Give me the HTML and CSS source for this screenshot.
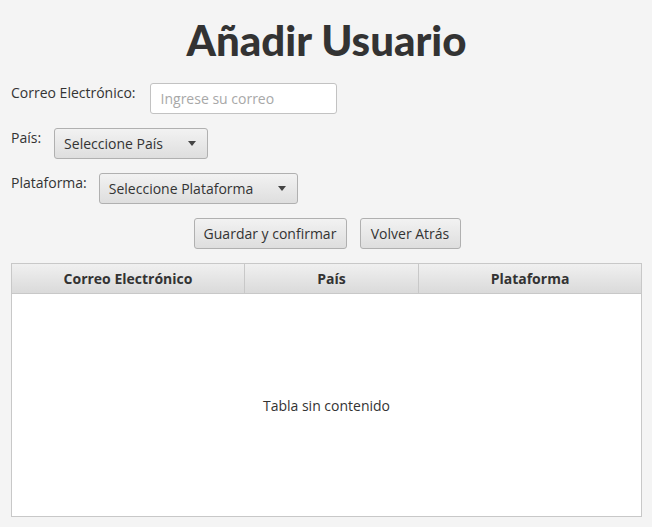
FILE: index.html
```html
<!DOCTYPE html>
<html lang="es">
<head>
<meta charset="utf-8">
<link rel="stylesheet" href="styles.css">
</head>
<body>
<div class="page">
  <h1 class="title">Añadir Usuario</h1>
  <div class="row row-email">
    <span class="label">Correo Electrónico:</span>
    <div class="field"><span class="placeholder">Ingrese su correo</span></div>
  </div>
  <div class="row row-pais">
    <span class="label">País:</span>
    <div class="combo combo-pais"><span class="combo-text">Seleccione País</span><span class="arrow"></span></div>
  </div>
  <div class="row row-plat">
    <span class="label">Plataforma:</span>
    <div class="combo combo-plat"><span class="combo-text">Seleccione Plataforma</span><span class="arrow"></span></div>
  </div>
  <div class="actions">
    <button class="btn btn-save">Guardar y confirmar</button>
    <button class="btn btn-back">Volver Atrás</button>
  </div>
  <div class="table">
    <div class="thead">
      <div class="th th-1">Correo Electrónico</div>
      <div class="th th-2">País</div>
      <div class="th th-3">Plataforma</div>
    </div>
    <div class="tbody">Tabla sin contenido</div>
  </div>
</div>
</body>
</html>
```
FILE: styles.css
```css
html, body {
  margin: 0;
  padding: 0;
  background: #f4f4f4;
}
body {
  font-family: "Open Sans", "Noto Sans", sans-serif;
  font-size: 14px;
  color: #333333;
  width: 652px;
  height: 527px;
  overflow: hidden;
}
.page {
  padding: 0 10px 0 11px;
  display: flex;
  flex-direction: column;
}
.title {
  margin: 14px 0 0 0;
  height: 52px;
  line-height: 52px;
  font-family: "Lato", "Open Sans", sans-serif;
  font-size: 42px;
  font-weight: 900;
  text-align: center;
  color: #333333;
}
.row {
  display: flex;
  align-items: flex-start;
}
.row-email { margin-top: 17px; }
.row-pais { margin-top: 14px; }
.row-plat { margin-top: 14px; }
.label {
  line-height: 18px;
  padding-top: 1px;
  white-space: nowrap;
}
.row-email .label { margin-right: 14px; }
.row-pais .label { margin-right: 13px; }
.row-plat .label { margin-right: 12px; }
.field {
  box-sizing: border-box;
  width: 187px;
  height: 31px;
  background: #ffffff;
  border: 1px solid #c2c2c2;
  border-radius: 3px;
  display: flex;
  align-items: center;
  padding-left: 10px;
}
.placeholder {
  color: #a8a8a8;
}
.combo {
  box-sizing: border-box;
  height: 31px;
  border: 1px solid #b0b0b0;
  border-radius: 3px;
  background: linear-gradient(#f2f2f2, #dedede);
  display: flex;
  align-items: center;
  padding-left: 9px;
  padding-right: 11px;
}
.combo-pais { width: 154px; }
.combo-plat { width: 199px; }
.combo-text {
  flex: 1;
  white-space: nowrap;
}
.arrow {
  width: 0;
  height: 0;
  border-left: 4px solid transparent;
  border-right: 4px solid transparent;
  border-top: 5px solid #444444;
}
.actions {
  display: flex;
  justify-content: center;
  gap: 13px;
  margin-top: 14px;
  padding-left: 1px;
}
.btn {
  box-sizing: border-box;
  height: 31px;
  border: 1px solid #b0b0b0;
  border-radius: 3px;
  background: linear-gradient(#f2f2f2, #dedede);
  font-family: inherit;
  font-size: 14px;
  color: #333333;
  padding: 0 6px;
  white-space: nowrap;
}
.btn-save { width: 153px; }
.btn-back { width: 101px; }
.table {
  box-sizing: border-box;
  margin-top: 14px;
  width: 631px;
  height: 254px;
  border: 1px solid #c8c8c8;
  background: #ffffff;
  display: flex;
  flex-direction: column;
}
.thead {
  display: flex;
  height: 30px;
  background: linear-gradient(#f0f0f0, #dadada);
  border-bottom: 1px solid #c8c8c8;
  box-sizing: border-box;
}
.th {
  box-sizing: border-box;
  display: flex;
  align-items: center;
  justify-content: center;
  font-weight: 700;
  font-size: 14px;
  color: #333333;
  border-right: 1px solid #c8c8c8;
}
.th-1 { width: 233px; }
.th-2 { width: 174px; }
.th-3 { flex: 1; border-right: none; }
.tbody {
  flex: 1;
  display: flex;
  align-items: center;
  justify-content: center;
  padding-top: 1px;
  color: #333333;
}
```
